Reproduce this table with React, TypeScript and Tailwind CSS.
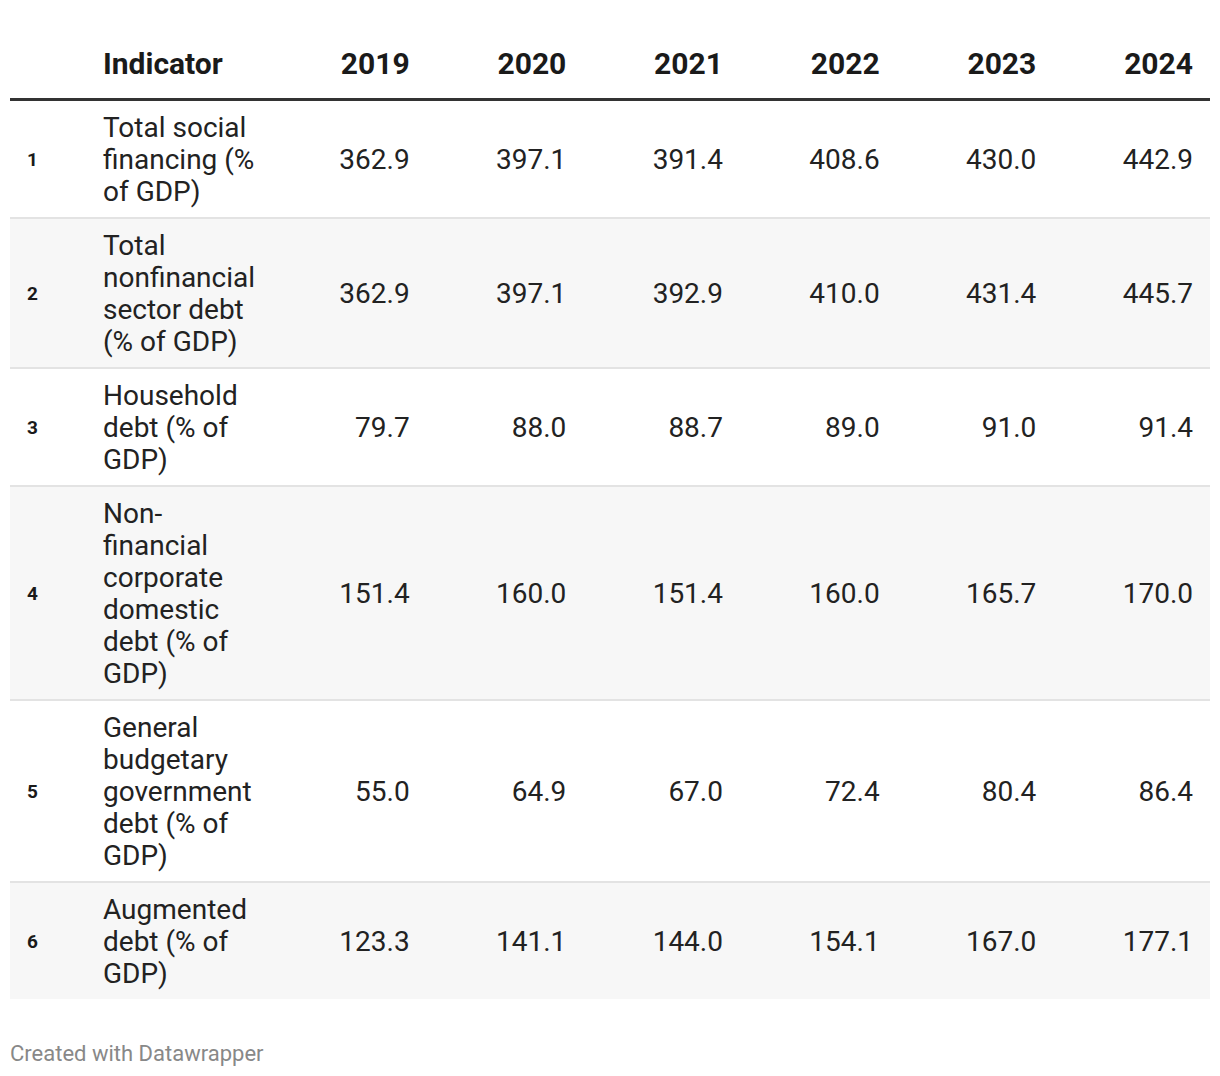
import React from 'react';

interface Row {
  label: string;
  values: string[];
}

const years = ['2019', '2020', '2021', '2022', '2023', '2024'];

const rows: Row[] = [
  { label: 'Total social financing (% of GDP)', values: ['362.9', '397.1', '391.4', '408.6', '430.0', '442.9'] },
  { label: 'Total nonfinancial sector debt (% of GDP)', values: ['362.9', '397.1', '392.9', '410.0', '431.4', '445.7'] },
  { label: 'Household debt (% of GDP)', values: ['79.7', '88.0', '88.7', '89.0', '91.0', '91.4'] },
  { label: 'Non-financial corporate domestic debt (% of GDP)', values: ['151.4', '160.0', '151.4', '160.0', '165.7', '170.0'] },
  { label: 'General budgetary government debt (% of GDP)', values: ['55.0', '64.9', '67.0', '72.4', '80.4', '86.4'] },
  { label: 'Augmented debt (% of GDP)', values: ['123.3', '141.1', '144.0', '154.1', '167.0', '177.1'] },
];

const App: React.FC = () => {
  return (
    <div className="w-[1220px] h-[1076px] bg-white pt-[30px] font-['Roboto',sans-serif] text-[#222]">
      <table className="ml-[10px] w-[1200px] table-fixed border-collapse">
        <colgroup>
          <col className="w-[83px]" />
          <col className="w-[177px]" />
          {years.map((y) => (
            <col key={y} />
          ))}
        </colgroup>
        <thead>
          <tr className="border-b-[3px] border-[#333]">
            <th className="pt-[16px] pb-[16px]"></th>
            <th className="pt-[16px] pb-[16px] pl-[10px] text-left text-[30px] leading-[36px] font-bold text-[#1a1a1a]">
              Indicator
            </th>
            {years.map((y) => (
              <th
                key={y}
                className="pt-[16px] pb-[16px] pr-[17px] text-right text-[30px] leading-[36px] font-bold text-[#1a1a1a]"
              >
                {y}
              </th>
            ))}
          </tr>
        </thead>
        <tbody>
          {rows.map((row, idx) => (
            <tr
              key={idx}
              className={`${idx % 2 === 1 ? 'bg-[#f7f7f7]' : 'bg-white'} ${
                idx < rows.length - 1 ? 'border-b-2 border-[#e3e3e3]' : ''
              }`}
            >
              <td className="pl-[17px] pt-[2px] align-middle text-[19px] font-bold text-[#1a1a1a]">{idx + 1}</td>
              <td className="pt-[11px] pb-[9px] pl-[10px] pr-[10px] align-middle text-[28px] leading-[32px]">
                {row.label}
              </td>
              {row.values.map((v, i) => (
                <td key={i} className="pr-[17px] pt-[2px] text-right align-middle text-[28px] leading-[32px]">
                  {v}
                </td>
              ))}
            </tr>
          ))}
        </tbody>
      </table>
      <p className="ml-[10px] mt-[42px] text-[22px] leading-[26px] text-[#888]">Created with Datawrapper</p>
    </div>
  );
};

export default App;
